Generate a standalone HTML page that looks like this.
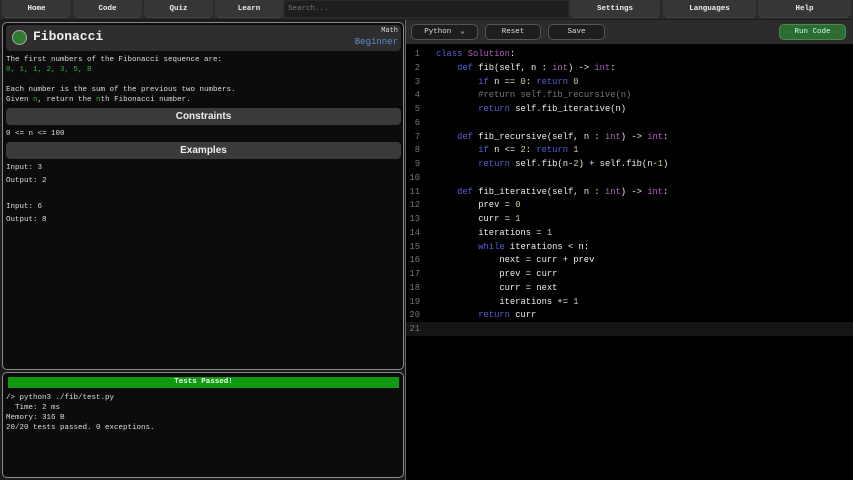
<!DOCTYPE html>
<html><head><meta charset="utf-8"><style>
*{box-sizing:border-box;margin:0;padding:0}
html,body{width:853px;height:480px;overflow:hidden}
body{background:#1c1c1c;font-family:"Liberation Sans",sans-serif;color:#ddd;position:relative}
.nav{position:absolute;top:0;left:0;width:853px;height:19px;background:#2a2a2a}
.nb{position:absolute;top:0;height:18px;background:#363636;border-radius:0 0 6px 6px;color:#eee;font:bold 7.5px "Liberation Mono",monospace;text-align:center;line-height:18px;border-bottom:1px solid #444}
.search{position:absolute;top:1px;left:285px;width:283px;height:16px;background:#1e1e1e;color:#777;font:7.5px "Liberation Mono",monospace;padding:4px 3px}
.panel{position:absolute;border:1px solid #8a8a8a;border-radius:5px;background:#0c0c0c}
.t{position:absolute;left:5px;font:7.5px "Liberation Mono",monospace;color:#ddd;white-space:pre}
.bar{position:absolute;left:5px;width:395px;height:17px;background:#3a3a3a;border-radius:4px;text-align:center;font:bold 10px "Liberation Sans",sans-serif;line-height:17px;color:#eee}
.g{color:#3cb043}
.code{position:absolute;left:406px;top:48px;width:447px;font:8.8px "Liberation Mono",monospace}
.ln{height:13.75px;line-height:13.75px;position:relative}
.ln .n{position:absolute;left:0;width:14px;text-align:right;color:#777}
.ln .c{position:absolute;left:30px;color:#eee;white-space:pre}
.k{color:#5560d8}.p{color:#b060c0}.cm{color:#777}.num{color:#d8c8a0}
.btn{position:absolute;top:24px;height:16px;border:1px solid #555;border-radius:5px;background:#1e1e1e;color:#ddd;font:7.5px "Liberation Mono",monospace;text-align:center;line-height:14px}
</style></head><body>
<div class="nav">
<div class="nb" style="left:2px;width:69px">Home</div>
<div class="nb" style="left:73px;width:69px">Code</div>
<div class="nb" style="left:144px;width:69px">Quiz</div>
<div class="nb" style="left:215px;width:68px">Learn</div>
<div class="search">Search...</div>
<div class="nb" style="left:570px;width:90px">Settings</div>
<div class="nb" style="left:663px;width:93px">Languages</div>
<div class="nb" style="left:758px;width:93px">Help</div>
</div>

<div class="panel" style="left:2px;top:22px;width:402px;height:348px">
<div style="position:absolute;left:3px;top:2px;width:395px;height:26px;background:#2e2e2e;border-radius:4px"></div>
<div style="position:absolute;left:9px;top:7px;width:15px;height:15px;border-radius:50%;background:#2f7a2f;border:1.5px solid #aaa"></div>
<div style="position:absolute;left:30px;top:6px;font:bold 13px 'Liberation Mono',monospace;color:#f0f0f0">Fibonacci</div>
<div style="position:absolute;right:5px;top:4px;font:7px 'Liberation Mono',monospace;color:#ddd">Math</div>
<div style="position:absolute;right:5px;top:14px;font:9px 'Liberation Mono',monospace;color:#5b8fd0">Beginner</div>
<div class="t" style="top:33px;left:3px">The first numbers of the Fibonacci sequence are:</div>
<div class="t g" style="top:43px;left:3px">0, 1, 1, 2, 3, 5, 8</div>
<div class="t" style="top:63px;left:3px">Each number is the sum of the previous two numbers.</div>
<div class="t" style="top:73px;left:3px">Given <span class="g">n</span>, return the <span class="g">n</span>th Fibonacci number.</div>
<div class="bar" style="top:85px;left:3px">Constraints</div>
<div class="t" style="top:107px;left:3px">0 &lt;= n &lt;= 100</div>
<div class="bar" style="top:119px;left:3px">Examples</div>
<div class="t" style="top:141px;left:3px">Input: 3</div>
<div class="t" style="top:154px;left:3px">Output: 2</div>
<div class="t" style="top:180px;left:3px">Input: 6</div>
<div class="t" style="top:193px;left:3px">Output: 8</div>
</div>

<div class="panel" style="left:2px;top:372px;width:402px;height:106px">
<div style="position:absolute;left:5px;top:4px;width:391px;height:11px;background:#119911;text-align:center;font:bold 7.5px 'Liberation Mono',monospace;line-height:11px;color:#e8ffe8">Tests Passed!</div>
<div class="t" style="top:20px;left:3px;line-height:10px">/&gt; python3 ./fib/test.py
  Time: 2 ms
Memory: 316 B
20/20 tests passed. 0 exceptions.</div>
</div>

<div style="position:absolute;left:406px;top:20px;width:447px;height:24px;background:#2c2c2c"></div>
<div style="position:absolute;left:406px;top:44px;width:447px;height:436px;background:#000"></div>
<div style="position:absolute;left:405px;top:20px;width:1px;height:460px;background:#666"></div>
<div class="btn" style="left:411px;width:67px">Python &nbsp;⌄</div>
<div class="btn" style="left:485px;width:56px">Reset</div>
<div class="btn" style="left:548px;width:57px">Save</div>
<div class="btn" style="left:779px;width:67px;background:#2e6b32;border-color:#4a8a4c;color:#cfe">Run Code</div>
<div style="position:absolute;left:406px;top:322px;width:447px;height:14px;background:#151515"></div>

<div class="code"><div class="ln"><span class="n">1</span><span class="c"><span class="k">class</span> <span class="p">Solution</span>:</span></div><div class="ln"><span class="n">2</span><span class="c">    <span class="k">def</span> fib(self, n : <span class="p">int</span>) -&gt; <span class="p">int</span>:</span></div><div class="ln"><span class="n">3</span><span class="c">        <span class="k">if</span> n == <span class="num">0</span>: <span class="k">return</span> <span class="num">0</span></span></div><div class="ln"><span class="n">4</span><span class="c">        <span class="cm">#return self.fib_recursive(n)</span></span></div><div class="ln"><span class="n">5</span><span class="c">        <span class="k">return</span> self.fib_iterative(n)</span></div><div class="ln"><span class="n">6</span><span class="c"></span></div><div class="ln"><span class="n">7</span><span class="c">    <span class="k">def</span> fib_recursive(self, n : <span class="p">int</span>) -&gt; <span class="p">int</span>:</span></div><div class="ln"><span class="n">8</span><span class="c">        <span class="k">if</span> n &lt;= <span class="num">2</span>: <span class="k">return</span> <span class="num">1</span></span></div><div class="ln"><span class="n">9</span><span class="c">        <span class="k">return</span> self.fib(n-<span class="num">2</span>) + self.fib(n-<span class="num">1</span>)</span></div><div class="ln"><span class="n">10</span><span class="c"></span></div><div class="ln"><span class="n">11</span><span class="c">    <span class="k">def</span> fib_iterative(self, n : <span class="p">int</span>) -&gt; <span class="p">int</span>:</span></div><div class="ln"><span class="n">12</span><span class="c">        prev = <span class="num">0</span></span></div><div class="ln"><span class="n">13</span><span class="c">        curr = <span class="num">1</span></span></div><div class="ln"><span class="n">14</span><span class="c">        iterations = <span class="num">1</span></span></div><div class="ln"><span class="n">15</span><span class="c">        <span class="k">while</span> iterations &lt; n:</span></div><div class="ln"><span class="n">16</span><span class="c">            next = curr + prev</span></div><div class="ln"><span class="n">17</span><span class="c">            prev = curr</span></div><div class="ln"><span class="n">18</span><span class="c">            curr = next</span></div><div class="ln"><span class="n">19</span><span class="c">            iterations += <span class="num">1</span></span></div><div class="ln"><span class="n">20</span><span class="c">        <span class="k">return</span> curr</span></div><div class="ln"><span class="n">21</span><span class="c"></span></div></div>
</body></html>
